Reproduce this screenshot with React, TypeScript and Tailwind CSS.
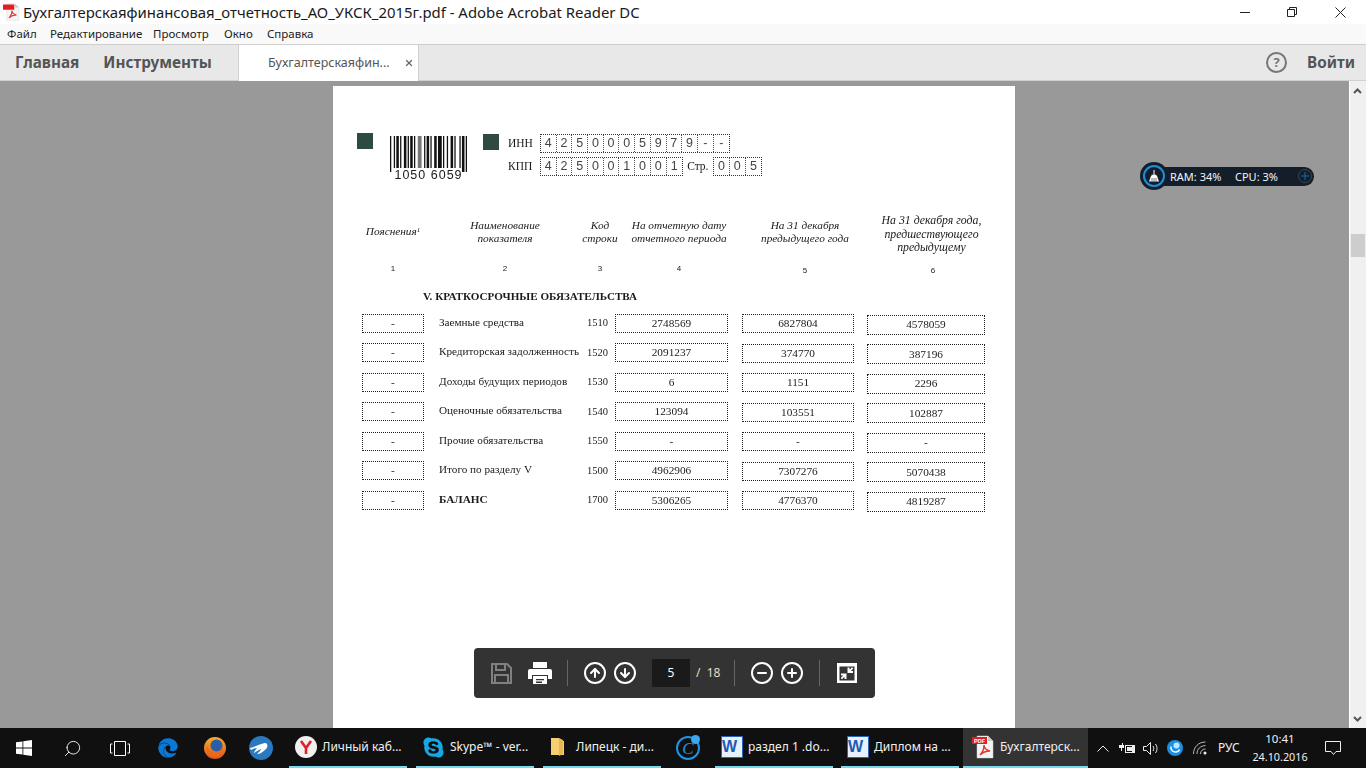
import { CircleArrowDown, CircleArrowUp, CircleMinus, CirclePlus, Search, X } from "lucide-react";
import type { ReactNode } from "react";
import { FaEdge, FaSkype } from "react-icons/fa";

const ui = "font-['Noto_Sans','Open_Sans',sans-serif]";

const menuItems = [
    { label: "Файл", className: "w-[43px]" },
    { label: "Редактирование", className: "w-[103px]" },
    { label: "Просмотр", className: "w-[71px]" },
    { label: "Окно", className: "w-[43px]" },
    { label: "Справка", className: "" },
];

const rows = [
    { name: "Заемные средства", code: "1510", a: "2748569", b: "6827804", c: "4578059" },
    { name: "Кредиторская задолженность", code: "1520", a: "2091237", b: "374770", c: "387196" },
    { name: "Доходы будущих периодов", code: "1530", a: "6", b: "1151", c: "2296" },
    { name: "Оценочные обязательства", code: "1540", a: "123094", b: "103551", c: "102887" },
    { name: "Прочие обязательства", code: "1550", a: "-", b: "-", c: "-" },
    { name: "Итого по разделу V", code: "1500", a: "4962906", b: "7307276", c: "5070438" },
    { name: "БАЛАНС", code: "1700", a: "5306265", b: "4776370", c: "4819287", bold: true },
];

const barWidths = [1, 2, 1, 1, 2, 1, 1, 2, 2, 1, 1, 1, 2, 1, 1, 2, 3, 2, 1, 1, 2, 1, 1, 2, 2, 1, 3, 1, 1, 2, 1, 2, 2, 1, 1, 3, 1, 1, 2, 1, 1];
const barTotal = barWidths.reduce((a, b) => a + b, 0);

function Barcode() {
    let x = 0;
    return (
        <svg width="77" height="36" viewBox={`0 0 ${barTotal} 36`} preserveAspectRatio="none" className="block">
            {barWidths.map((w, i) => {
                const cur = x;
                x += w;
                if (i % 2 === 1) return null;
                return <rect key={i} x={cur} y="0" width={w} height={i < 2 || i > 36 ? 36 : 32} fill={i === 16 ? "#777" : "#111"} />;
            })}
        </svg>
    );
}

function DigitBoxes({ digits }: { digits: string }) {
    return (
        <div className="flex h-[19px] border border-dotted border-[#333]">
            {digits.split("").map((d, i) => (
                <span key={i} className="flex w-[15.7px] items-center justify-center border-r border-dotted border-[#555] font-['Liberation_Sans',sans-serif] text-[12.5px] text-[#444] last:border-r-0">
                    {d}
                </span>
            ))}
        </div>
    );
}

function PdfIcon({ small }: { small?: boolean }) {
    return (
        <svg width={small ? 18 : 24} height={small ? 18 : 24} viewBox="0 0 24 24" className="shrink-0">
            <path d="M5 1h11l5 5v17H5z" fill="#f4f4f4" stroke="#cfcfcf" strokeWidth="0.5" />
            <path d="M16 1v5h5z" fill="#c9c9c9" />
            <rect x="0" y="2" width="15" height="7" fill="#e02020" />
            {!small && <text x="2" y="8" fontSize="5.500" fontWeight="700" fill="#fff" fontFamily="Liberation Sans, sans-serif">PDF</text>}
            <path d="M8 20c3-3 4-7 4-10 0 3 2 5 6 6-3 0-7 1-10 4z" fill="none" stroke="#e0372f" strokeWidth="1.4" />
        </svg>
    );
}

function WordIcon() {
    return (
        <div className="relative h-[22px] w-[22px] shrink-0 border border-[#2a64b8] bg-[#e8f0fa]">
            <span className="absolute left-0 top-[1px] font-['Liberation_Sans',sans-serif] text-[16px] font-bold leading-[18px] text-[#1c5cb5]">W</span>
        </div>
    );
}

function TaskButton({ icon, label, className }: { icon: ReactNode; label: string; className: string }) {
    return (
        <div className={`flex h-full items-center gap-[5px] border-b-2 border-[#76d9ee] pl-[6px] ${className}`}>
            {icon}
            <span className="whitespace-nowrap text-[12px] text-[#f0f0f0]">{label}</span>
        </div>
    );
}

function App() {
    return (
        <div className={`flex h-[768px] w-[1366px] flex-col overflow-hidden bg-[#999999] ${ui}`}>
            {/* title bar */}
            <div className="flex h-[24px] items-center bg-white">
                <div className="ml-[3px] mr-[2px]">
                    <PdfIcon small />
                </div>
                <span className="whitespace-nowrap text-[14.9px] text-[#1a1a1a]">Бухгалтерскаяфинансовая_отчетность_АО_УКСК_2015г.pdf - Adobe Acrobat Reader DC</span>
                <div className="ml-auto flex items-center">
                    <svg width="10" height="10" viewBox="0 0 10 10" className="mr-[37px]"><path d="M0 5.500h10" stroke="#222" strokeWidth="1" /></svg>
                    <svg width="10" height="10" viewBox="0 0 10 10" className="mr-[38px]"><path d="M.5 2.500h7v7h-7zM2.500 2.500v-2h7v7h-2" fill="none" stroke="#222" /></svg>
                    <svg width="11" height="11" viewBox="0 0 11 11" className="mr-[20px]"><path d="M.5.500l10 10M10.500.500l-10 10" stroke="#222" /></svg>
                </div>
            </div>

            {/* menu */}
            <div className="flex h-[21px] items-center border-b border-[#cfcfcf] bg-[#f9f9f9] pl-[7px] text-[11.5px] text-[#222]">
                {menuItems.map((m) => (
                    <span key={m.label} className={`shrink-0 ${m.className}`}>{m.label}</span>
                ))}
            </div>

            {/* tabs */}
            <div className="flex h-[36px] items-stretch border-b border-[#d0d0d0] bg-[#e8e8e8] text-[#555]">
                <div className="flex w-[238px] items-center gap-[24px] pl-[15px] text-[15.3px] font-bold">
                    <span>Главная</span>
                    <span>Инструменты</span>
                </div>
                <div className="flex h-[36px] w-[181px] items-center border-x border-[#d0d0d0] bg-white pl-[29px] text-[12.500px] text-[#555]">
                    <span className="w-[136px] whitespace-nowrap">Бухгалтерскаяфин...</span>
                    <X size={10} strokeWidth={3} className="text-[#666]" />
                </div>
                <div className="ml-auto flex items-center pr-[11px]">
                    <div className="mr-[20px] flex h-[21px] w-[21px] items-center justify-center rounded-full border-2 border-[#777] text-[13px] font-bold text-[#777]">?</div>
                    <span className="text-[15.3px] font-bold">Войти</span>
                </div>
            </div>

            {/* document area */}
            <div className="relative flex min-h-0 flex-1">
                <div className="flex min-w-0 flex-1 justify-center overflow-hidden pr-px pt-[5px]">
                    <div className="h-[800px] w-[682px] shrink-0 bg-white pt-[47px] font-['Liberation_Serif',serif] text-[#1a1a1a] blur-[0.4px]">
                        {/* barcode row */}
                        <div className="flex h-[52px]">
                            <div className="ml-[24px] h-[16px] w-[16px] bg-[#2f4a43]" />
                            <div className="ml-[17px] mt-[3px] w-[77px]">
                                <Barcode />
                                <div className="-mt-[3px] text-center font-['Liberation_Sans',sans-serif] text-[12.5px] leading-[13px] tracking-[1px]">1050 6059</div>
                            </div>
                            <div className="ml-[16px] mt-[1px] h-[16px] w-[16px] bg-[#2f4a43]" />
                            <div className="ml-[9px] mt-[1px] flex flex-col gap-[4px]">
                                <div className="flex items-center">
                                    <span className="w-[32px] text-[11.5px]">ИНН</span>
                                    <DigitBoxes digits="4250005979--" />
                                </div>
                                <div className="flex items-center">
                                    <span className="w-[32px] text-[11.5px]">КПП</span>
                                    <DigitBoxes digits="425001001" />
                                    <span className="ml-[4px] w-[26px] text-[11.5px]">Стр.</span>
                                    <DigitBoxes digits="005" />
                                </div>
                            </div>
                        </div>

                        {/* table head */}
                        <div className="ml-[29px] mt-[25px] flex h-[44px] items-center text-center text-[11.3px] italic leading-[13.5px]">
                            <div className="w-[62px]">Пояснения<sup className="text-[7px]">1</sup></div>
                            <div className="ml-[6px] w-[150px]">Наименование<br />показателя</div>
                            <div className="w-[40px]">Код<br />строки</div>
                            <div className="w-[118px]">На отчетную дату<br />отчетного периода</div>
                            <div className="w-[134px]">На 31 декабря<br />предыдущего года</div>
                            <div className="mt-[5px] w-[122px] pr-[3px] text-[11.8px]">На 31 декабря года,<br />предшествующего<br />предыдущему</div>
                        </div>
                        <div className="ml-[29px] mt-[9px] flex text-center font-['Liberation_Sans',sans-serif] text-[8px] leading-[12px]">
                            <div className="w-[62px]">1</div>
                            <div className="ml-[6px] w-[150px]">2</div>
                            <div className="w-[40px]">3</div>
                            <div className="w-[118px]">4</div>
                            <div className="mt-[2px] w-[134px]">5</div>
                            <div className="mt-[2px] w-[122px]">6</div>
                        </div>

                        <div className="ml-[90px] mt-[12px] text-[11.1px] font-bold leading-[14px]">V. КРАТКОСРОЧНЫЕ ОБЯЗАТЕЛЬСТВА</div>

                        {/* table rows */}
                        <div className="ml-[29px] mt-[11px] flex flex-col gap-[11.5px] text-[11.3px]">
                            {rows.map((r) => (
                                <div key={r.code} className="flex h-[18px] items-center">
                                    <div className="flex h-[19px] w-[62px] items-center justify-center border border-dotted border-[#222]">-</div>
                                    <div className={`mb-[2px] ml-[15px] w-[148px] whitespace-nowrap text-[11.2px] ${r.bold ? "font-bold" : ""}`}>{r.name}</div>
                                    <div className="w-[28px] text-[10.5px]">{r.code}</div>
                                    <div className="flex h-[19px] w-[113px] items-center justify-center border border-dotted border-[#222]">{r.a}</div>
                                    <div className="ml-[14px] mt-[1px] flex h-[19px] w-[112px] items-center justify-center border border-dotted border-[#222]">{r.b}</div>
                                    <div className="ml-[13px] mt-[3px] flex h-[20px] w-[118px] items-center justify-center border border-dotted border-[#222]">{r.c}</div>
                                </div>
                            ))}
                        </div>
                    </div>
                </div>

                {/* scrollbar */}
                <div className="relative w-[17px] border-l border-white bg-[#f0f0f0]">
                    <svg width="9" height="6" viewBox="0 0 9 6" className="absolute left-[3px] top-[7px]"><path d="M1 5l3.500-3.500L8 5" fill="none" stroke="#555" strokeWidth="2" /></svg>
                    <div className="absolute left-[1px] top-[153px] h-[23px] w-[14px] bg-[#cdcdcd]" />
                    <svg width="9" height="6" viewBox="0 0 9 6" className="absolute bottom-[6px] left-[3px]"><path d="M1 1l3.500 3.500L8 1" fill="none" stroke="#555" strokeWidth="2" /></svg>
                </div>

                {/* RAM widget */}
                <div className="absolute left-[1140px] top-[81px] flex h-[28px] w-[174px] items-center">
                    <div className="absolute left-[15px] top-[5px] h-[19px] w-[159px] rounded-r-full bg-[#141e2a]" />
                    <div className="absolute left-0 top-0 flex h-[28px] w-[28px] items-center justify-center rounded-full bg-[#141e2a]">
                        <div className="flex h-[22px] w-[22px] items-center justify-center rounded-full border-2 border-[#1d8fdc]">
                            <svg width="12" height="12" viewBox="0 0 12 12" fill="none" stroke="#fff"><path d="M6 0v5" /><path d="M3.500 5.500h5" strokeWidth="1.500" /><path d="M3 6l-2 5.500h10L9 6z" fill="#fff" stroke="none" /><path d="M4 8v3.500M6 8v3.500M8 8v3.500" stroke="#141e2a" strokeWidth="0.6" /></svg>
                        </div>
                    </div>
                    <span className="absolute left-[30px] top-[7px] whitespace-nowrap text-[11px] leading-[15px] text-[#eef4f8]">RAM: 34%</span>
                    <span className="absolute left-[95px] top-[7px] whitespace-nowrap text-[11px] leading-[15px] text-[#eef4f8]">CPU: 3%</span>
                    <div className="absolute left-[158px] top-[7px] flex h-[14px] w-[14px] items-center justify-center rounded-full border border-[#33465a] text-[#0f6db0]">
                        <svg width="8" height="8" viewBox="0 0 8 8"><path d="M4 0v8M0 4h8" stroke="currentColor" /></svg>
                    </div>
                </div>

                {/* floating toolbar */}
                <div className="absolute left-[474px] top-[567px] flex h-[50px] w-[401px] items-center rounded-[4px] bg-[#333333] text-white">
                    <svg width="21" height="21" viewBox="0 0 21 21" className="ml-[17px]" fill="none" stroke="#808080" strokeWidth="2"><path d="M1 1h15l4 4v15H1z" /><path d="M5 1v6h9V1M4 20v-8h13v8" /></svg>
                    <svg width="24" height="22" viewBox="0 0 24 22" className="ml-[16px]"><path fill="#fff" fillRule="evenodd" d="M5 0h14v6H5zM2 7h20a2 2 0 0 1 2 2v8h-4v-4H4v4H0V9a2 2 0 0 1 2-2zM5 14h14v8H5zm3 3v1.300h8V17zm0 2.500V21h6v-1.500z" /></svg>
                    <div className="ml-[15px] h-[26px] w-px bg-[#666]" />
                    <CircleArrowUp size={24} strokeWidth={2} className="ml-[15px]" />
                    <CircleArrowDown size={24} strokeWidth={2} className="ml-[6px]" />
                    <div className="ml-[15px] flex h-[28px] w-[38px] items-center justify-center bg-[#1a1a1a] text-[12px]">5</div>
                    <span className="ml-[6px] whitespace-nowrap text-[12px] text-[#e4dcc4]">/&nbsp; 18</span>
                    <div className="ml-[14px] h-[26px] w-px bg-[#666]" />
                    <CircleMinus size={24} strokeWidth={2} className="ml-[15px]" />
                    <CirclePlus size={24} strokeWidth={2} className="ml-[6px]" />
                    <div className="ml-[15px] h-[26px] w-px bg-[#666]" />
                    <svg width="20" height="20" viewBox="0 0 20 20" className="ml-[17px]"><path fill="#fff" fillRule="evenodd" d="M0 0h20v20H0zm2.500 3.500v14h15v-14z" /><path fill="#fff" d="M10.500 4.500h2v2.300l2.500-2.500 1.300 1.300-2.500 2.500h2.200v2h-5.500zM4 10.500h5.500V16h-2v-2.300L5 16.200l-1.300-1.300 2.500-2.500H4z" /></svg>
                </div>
            </div>

            {/* taskbar */}
            <div className="flex h-[40px] items-stretch bg-[#101010] text-[#f0f0f0]">
                <div className="flex w-[48px] items-center justify-center">
                    <svg width="16" height="16" viewBox="0 0 16 16" fill="#fff"><path d="M0 2.300l6.500-.9v6.200H0zM7.300 1.300L16 0v7.600H7.300zM0 8.400h6.500v6.200L0 13.700zM7.300 8.400H16V16l-8.700-1.300z" /></svg>
                </div>
                <div className="flex w-[48px] items-center justify-center">
                    <Search size={19} strokeWidth={1.2} className="-scale-x-100" />
                </div>
                <div className="flex w-[48px] items-center justify-center">
                    <svg width="20" height="15" viewBox="0 0 20 15" fill="none" stroke="#fff"><path d="M4.500 .5h11v14h-11zM2.500 3H.5v9h2M17.500 3h2v9h-2" /></svg>
                </div>
                <div className="flex w-[48px] items-center justify-center"><FaEdge size={20} className="text-[#0a78d4]" /></div>
                <div className="flex w-[48px] items-center justify-center pr-[3px]">
                    <svg width="22" height="22" viewBox="0 0 22 22">
                        <defs>
                            <linearGradient id="fox" x1="0" y1="0" x2="0" y2="1">
                                <stop offset="0" stopColor="#f5b02e" />
                                <stop offset="1" stopColor="#e0521c" />
                            </linearGradient>
                        </defs>
                        <circle cx="11" cy="11" r="11" fill="url(#fox)" />
                        <circle cx="12.500" cy="8.500" r="6" fill="#2a5ea8" />
                        <path d="M3 8c1 6 5 9 10 8 3-.5 5-3 5.500-6 1 5-3 10-8 10-5.500 0-9-5-7.500-12z" fill="#e86a1e" />
                    </svg>
                </div>
                <div className="flex w-[48px] items-center justify-center pr-[6px]">
                    <svg width="24" height="24" viewBox="0 0 24 24"><circle cx="12" cy="12" r="12" fill="#2a78c0" /><path d="M1 12c5-1 9-4 15-5 3 0 3 4 1 6-3 3-6 5-9 5 2-2 4-4 4-5-3 1-5 3-7 4 0-2 2-3 3-5-2 0-4 1-6 2z" fill="#fff" /></svg>
                </div>
                <TaskButton
                    className="ml-px w-[118px]"
                    label="Личный каб..."
                    icon={
                        <svg width="22" height="22" viewBox="0 0 22 22" className="shrink-0"><circle cx="11" cy="11" r="11" fill="#f0f0f0" /><path d="M6 5l5 7 5-7M11 12v6" fill="none" stroke="#e2202c" strokeWidth="2.600" /></svg>
                    }
                />
                <TaskButton className="ml-[9px] w-[118px]" label="Skype™ - ver..." icon={<FaSkype size={23} className="shrink-0 text-[#17a7e4]" />} />
                <TaskButton
                    className="ml-[9px] w-[118px]"
                    label="Липецк - ди..."
                    icon={
                        <svg width="20" height="22" viewBox="0 0 20 22" className="mr-[2px] shrink-0"><path d="M2 2h8v2l5 1v14H2z" fill="#f6d06e" /><path d="M10 2l4 2v14l-4 2z" fill="#e5b94d" /></svg>
                    }
                />
                <div className="ml-[9px] flex w-[36px] items-center justify-center">
                    <div className="relative flex h-[24px] w-[24px] items-center justify-center rounded-full border-2 border-[#1d95e2]">
                        <span className="font-['Liberation_Serif',serif] text-[17px] italic leading-none text-[#1d95e2]">C</span>
                        <span className="absolute -right-[2px] -top-[3px] h-[9px] w-[9px] rounded-full bg-[#3aa9ee]" />
                    </div>
                </div>
                <TaskButton className="ml-[9px] w-[118px]" label="раздел 1 .do..." icon={<WordIcon />} />
                <TaskButton className="ml-[8px] w-[118px]" label="Диплом на ..." icon={<WordIcon />} />
                <div className="ml-[4px] flex w-[125px] items-center gap-[4px] border-b-2 border-[#76d9ee] bg-[#333333] pl-[9px]">
                    <PdfIcon />
                    <span className="whitespace-nowrap text-[12px]">Бухгалтерск...</span>
                </div>

                {/* tray */}
                <div className="ml-[9px] flex items-center">
                    <svg width="12" height="7" viewBox="0 0 12 7" fill="none" stroke="#eee"><path d="M.5 6.500l5.500-5.500 5.500 5.500" /></svg>
                    <svg width="16" height="11" viewBox="0 0 16 11" className="ml-[10px]" fill="#eee"><path d="M0 2h3V0h1v2h1v3H0zM2 5h1v3H2zM6 2h10v8H6zm1 1v6h6V3z" /><path d="M8 4h5v4H8z" /></svg>
                    <svg width="16" height="13" viewBox="0 0 16 13" className="ml-[8px]" fill="none" stroke="#eee"><path d="M.5 4.500h3l4-4v12l-4-4h-3zM10 4c1 1.500 1 3.500 0 5M12.500 2c2 3 2 6 0 9" /></svg>
                    <svg width="16" height="16" viewBox="0 0 16 16" className="ml-[8px]"><circle cx="8" cy="8" r="8" fill="#1d8fe0" /><path d="M4 6.500c-.5 3 1.500 5.500 4.500 5.500 2 0 3.500-1 4-2.500" fill="none" stroke="#fff" strokeWidth="1.500" /><circle cx="9.500" cy="5.500" r="3" fill="#bfe6fb" /></svg>
                    <svg width="16" height="14" viewBox="0 0 16 14" className="ml-[10px]" fill="none" stroke="#bbb"><path d="M.5 13c0-7 5-12 12-12M4 13c0-5 3-8 8.500-8.500M7.500 13c0-3 2-5 5-5" /><circle cx="12" cy="12" r="1.500" fill="#eee" stroke="none" /></svg>
                    <span className="ml-[9px] w-[28px] text-[12px]">РУС</span>
                    <div className="ml-[4px] flex w-[60px] flex-col items-center text-[10.8px] leading-[18px]">
                        <span className="text-[11.5px]">10:41</span>
                        <span>24.10.2016</span>
                    </div>
                    <svg width="16" height="15" viewBox="0 0 16 15" className="ml-[15px]" fill="none" stroke="#eee"><path d="M.5.500h15v10H11l-2.500 3-2.500-3H.5z" /></svg>
                </div>
            </div>
        </div>
    );
}

export default App;
